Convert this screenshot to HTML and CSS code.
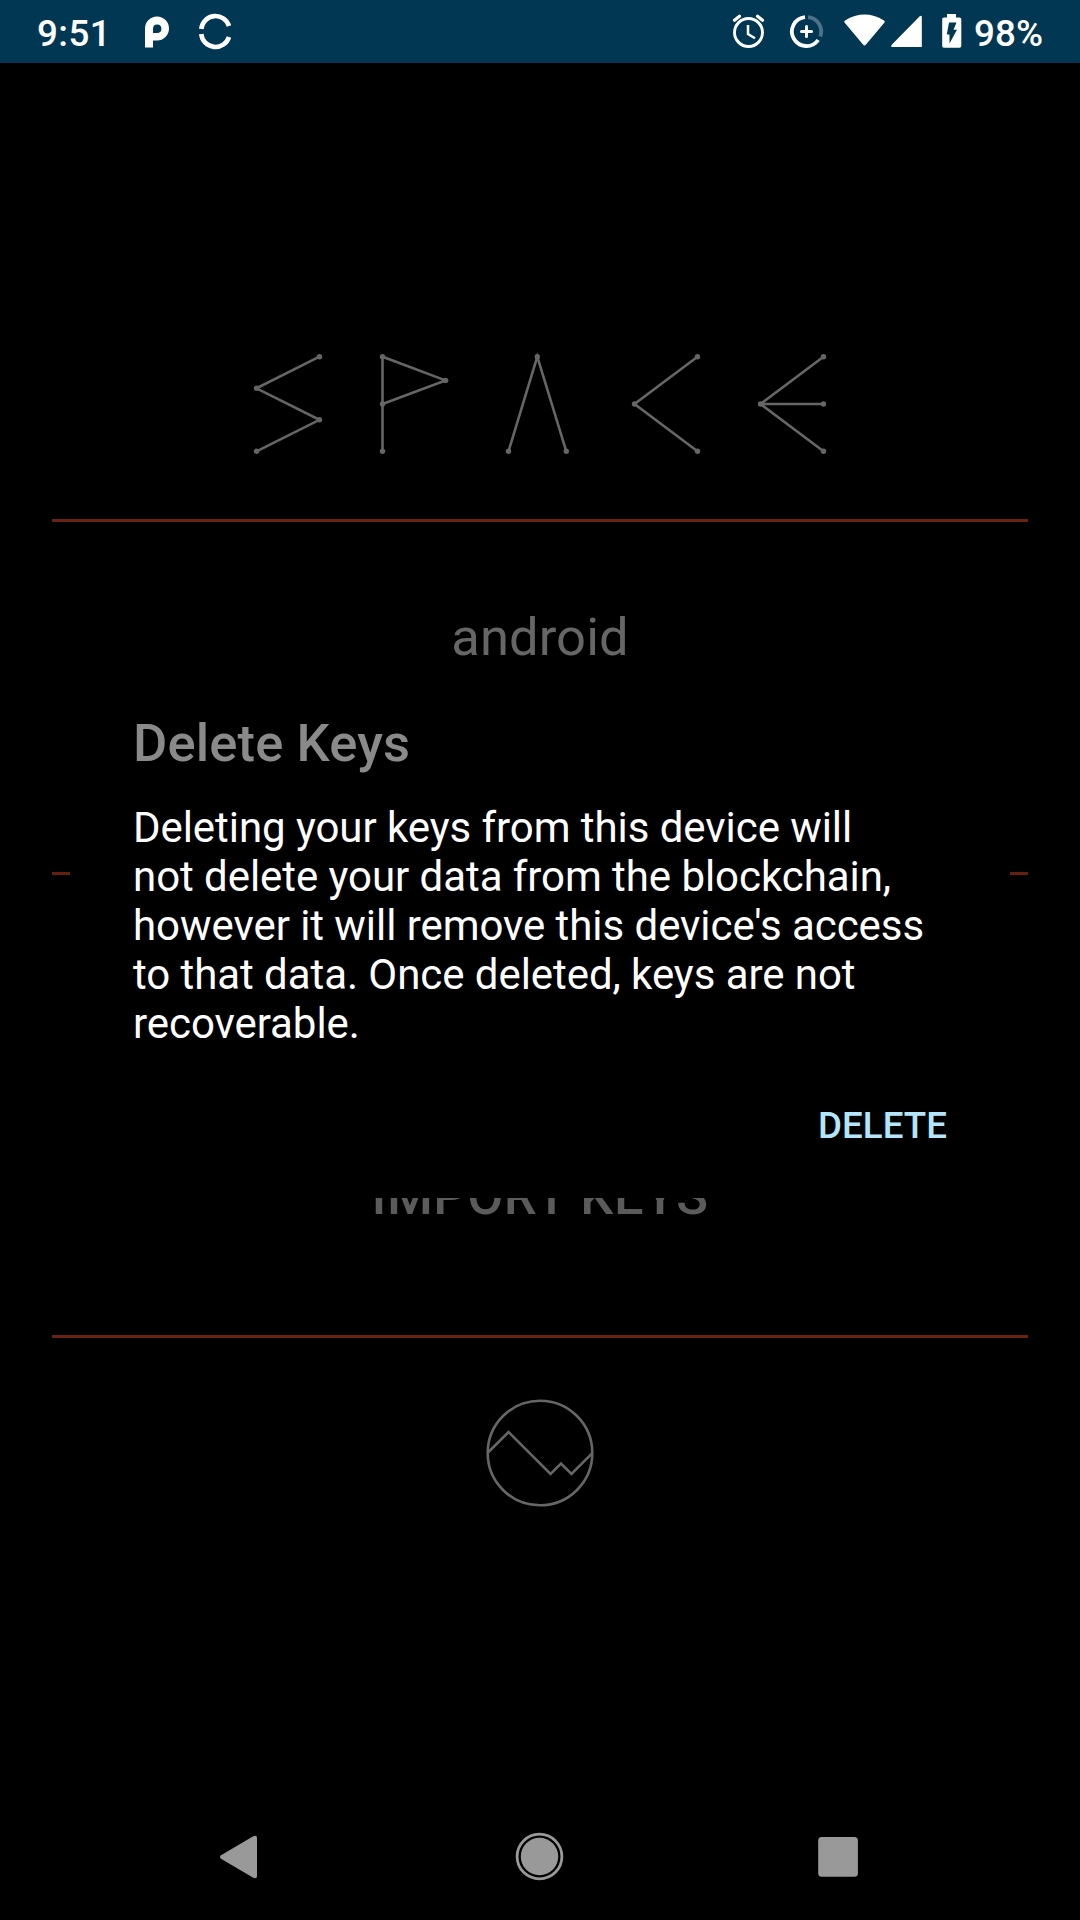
FILE: index.html
```html
<!DOCTYPE html>
<html lang="en">
<head>
<meta charset="utf-8">
<title>Space – Delete Keys</title>
<link rel="stylesheet" href="styles.css">
</head>
<body>
<div class="screen">
  <header class="status">
    <span class="clock">9:51</span>
    <svg class="status-left" width="100" height="63" viewBox="140 0 100 63">
      <path fill="#fff" fill-rule="evenodd" d="M145 47.5V28.500A12 12 0 1 1 157 40.500H153V47.500ZM153 33V28.500A4.200 4.200 0 1 1 157.200 33Z"/>
      <path fill="none" stroke="#fff" stroke-width="4.600" d="M201.300 29A14.200 14.200 0 0 1 229 26M201.300 34A14.200 14.200 0 0 0 229 37"/>
    </svg>
    <svg class="status-right" width="240" height="63" viewBox="725 0 240 63">
      <g fill="none" stroke="#fff" stroke-linecap="round">
        <circle cx="748.500" cy="32.500" r="14" stroke-width="2.900"/>
        <path stroke-width="3.200" d="M734.500 20.300L739.500 16.200M762.500 20.300L757.500 16.200"/>
        <path stroke-width="2.500" stroke-linecap="butt" d="M748 25V34L755 38.200"/>
        <path stroke-width="3.800" stroke-linecap="butt" d="M805 17.100A14.500 14.500 0 1 0 818.200 40"/>
        <path stroke="#4e7187" stroke-width="3.800" stroke-linecap="butt" d="M808 17.100A14.500 14.500 0 0 1 820.300 36.500"/>
        <path stroke-width="3" d="M806.500 26.500V36.500M801.500 31.500H811.500"/>
      </g>
      <path fill="#fff" d="M844.500 22.500Q843.800 21.300 845 20.400Q864.500 8.800 884 20.400Q885.200 21.300 884.500 22.500L866 44.500Q864.500 46.300 863 44.500Z"/>
      <path fill="#fff" d="M921.800 17V47H892.500Q890.500 47 891.500 45L919.500 16.500Q921.800 15 921.800 17Z"/>
      <path fill="#fff" d="M947 14H956V17.500H959.500Q961.300 17.500 961.300 19.300V46Q961.300 47.800 959.500 47.800H944Q942.200 47.800 942.200 46V19.300Q942.200 17.500 944 17.500H947Z"/>
      <path fill="#023753" d="M949 22.500H956.500L953.500 29.800H957L949.500 43.500V34.500H946.800Z"/>
    </svg>
    <span class="battery">98%</span>
  </header>

  <main class="app">
    <div class="brand">
      <svg class="wordmark" width="576" height="110" viewBox="252 349 576 110" role="img" aria-label="SPACE">
        <g fill="none" stroke="#666" stroke-width="2.600">
          <path d="M319.500 356.700L256.500 388.300L319.500 419.800L256.500 451.300"/>
          <path d="M382.500 451.300V356.700L445.500 380.400L382.500 404"/>
          <path d="M508.500 451.300L537.300 356.700L566.300 451.300"/>
          <path d="M697.500 356.700L634.500 404L697.500 451.300"/>
          <path d="M823.500 356.700L760.500 404L823.500 451.300M760.500 404H823.500"/>
        </g>
        <g fill="#666">
          <circle cx="319.500" cy="356.700" r="2.700"/><circle cx="256.500" cy="388.300" r="2.700"/><circle cx="319.500" cy="419.800" r="2.700"/><circle cx="256.500" cy="451.300" r="2.700"/>
          <circle cx="382.500" cy="356.700" r="2.700"/><circle cx="445.500" cy="380.400" r="2.700"/><circle cx="382.500" cy="404" r="2.700"/><circle cx="382.500" cy="451.300" r="2.700"/>
          <circle cx="508.500" cy="451.300" r="2.700"/><circle cx="537.300" cy="356.700" r="2.700"/><circle cx="566.300" cy="451.300" r="2.700"/>
          <circle cx="697.500" cy="356.700" r="2.700"/><circle cx="634.500" cy="404" r="2.700"/><circle cx="697.500" cy="451.300" r="2.700"/>
          <circle cx="823.500" cy="356.700" r="2.700"/><circle cx="760.500" cy="404" r="2.700"/><circle cx="823.500" cy="404" r="2.700"/><circle cx="823.500" cy="451.300" r="2.700"/>
        </g>
      </svg>
    </div>
    <section class="device">android</section>
    <section class="actions"><span class="import">IMPORT KEYS</span></section>
    <div class="emblem">
      <svg width="110" height="110" viewBox="485 1398 110 110" fill="none" stroke="#666" stroke-width="2.600">
        <circle cx="540" cy="1453" r="52.300"/>
        <path d="M488 1452.500L508.500 1432L550.500 1474L561 1463.500L571.500 1474L592.300 1453.200"/>
      </svg>
    </div>
  </main>

  <nav class="nav">
    <svg width="640" height="50" viewBox="219 1832 640 50" fill="#999">
      <path d="M221 1855.200L252.800 1836.400Q257 1834.500 257 1838V1876Q257 1879.500 252.800 1877.600L221 1858.800Q219 1857 221 1855.200Z"/>
      <circle cx="539.500" cy="1856.500" r="18.700"/>
      <circle cx="539.500" cy="1856.500" r="22.400" fill="none" stroke="#999" stroke-width="2.800"/>
      <rect x="818.200" y="1837" width="39.700" height="39.700" rx="3.500"/>
    </svg>
  </nav>

  <div class="dialog" role="dialog">
    <h1 class="title">Delete Keys</h1>
    <p class="message">Deleting your keys from this device will<br>not delete your data from the blockchain,<br>however it will remove this device's access<br>to that data. Once deleted, keys are not<br>recoverable.</p>
    <div class="buttons"><button class="delete">DELETE</button></div>
  </div>
</div>
</body>
</html>
```
FILE: styles.css
```css
* { box-sizing: border-box; }
body { margin: 0; background: #000; font-family: Roboto, sans-serif; }
svg { display: block; flex: none; }

.screen {
  position: relative;
  display: flex;
  flex-direction: column;
  width: 1080px;
  height: 1920px;
  overflow: hidden;
  background: #000;
}

.status {
  display: flex;
  flex: none;
  height: 63px;
  padding: 0 36px;
  background: #023753;
  color: #fff;
  font-size: 36.75px;
  font-weight: 500;
  line-height: 67px;
}
.clock { width: 104px; padding-left: 1px; letter-spacing: 0.4px; }
.status-right { margin-left: auto; }
.battery { width: 79px; padding-left: 9px; letter-spacing: 0.1px; }

.app {
  display: flex;
  flex-direction: column;
  flex: 1;
  padding: 0 52px;
}
.brand {
  display: flex;
  justify-content: center;
  height: 459px;
  padding-top: 286px;
  border-bottom: 3px solid #6a2212;
}
.device {
  height: 353px;
  padding-top: 84px;
  border-bottom: 3px solid #66200e;
  color: #666;
  font-size: 52.5px;
  letter-spacing: 0.1px;
  line-height: 62px;
  text-align: center;
}
.actions {
  display: flex;
  justify-content: center;
  height: 463px;
  padding-top: 290px;
  border-bottom: 3px solid #6a2212;
}
.import {
  color: #5b5b5b;
  font-size: 52.5px;
  font-weight: 500;
  letter-spacing: 0.45px;
  line-height: 62px;
}
.emblem { display: flex; justify-content: center; padding-top: 60px; }

.nav {
  display: flex;
  justify-content: center;
  flex: none;
  height: 126px;
  padding-top: 38px;
}
.nav svg { margin-right: 2px; }

.dialog {
  position: absolute;
  top: 680px;
  left: 70px;
  width: 940px;
  height: 518px;
  padding: 32px 63px 0;
  background: #000;
}
.title { margin: 0; color: #8a8a8a; font-size: 52.5px; font-weight: 500; letter-spacing: 0.15px; line-height: 62px; }
.message { margin: 29px 0 0; color: #fff; font-size: 42px; letter-spacing: -0.06px; line-height: 49px; white-space: nowrap; }
.buttons { display: flex; justify-content: flex-end; padding-top: 56px; }
.delete {
  padding: 0;
  border: 0;
  background: none;
  color: #b3e5fc;
  font: 500 36.75px/44px Roboto, sans-serif;
}
```
